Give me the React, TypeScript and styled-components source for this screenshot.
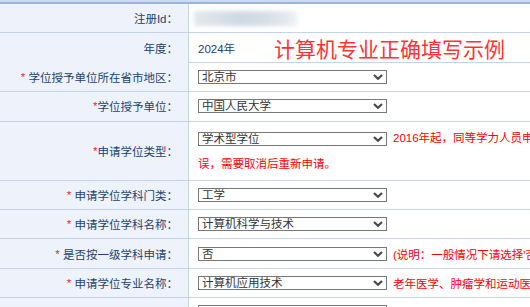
import React from 'react';
import styled, { createGlobalStyle } from 'styled-components';

const Global = createGlobalStyle`
  html, body {
    margin: 0;
    padding: 0;
    background: #fff;
    overflow: hidden;
  }
  body {
    font-family: "Liberation Sans", "Noto Sans CJK SC", sans-serif;
    font-size: 11.5px;
  }
`;

const Wrapper = styled.div`
  width: 835px;
  border-top: 2px solid #cbdaee;
`;

const Form = styled.div`
  border-top: 2px solid #98b6db;
`;

interface RowProps {
  tall?: boolean;
}

const Row = styled.div<RowProps>`
  display: grid;
  grid-template-columns: 189px 1fr;
  height: ${(p) => (p.tall ? '59px' : '29.4px')};
  box-sizing: border-box;
  border-bottom: 1px solid #c3d4ea;
`;

const Label = styled.div`
  display: flex;
  align-items: center;
  justify-content: flex-end;
  padding-right: 10px;
  background: #eef3fb;
  border-right: 1px solid #c3d4ea;
  color: #21426e;
  white-space: nowrap;
`;

const Star = styled.span`
  color: #f01e2c;
`;

const Value = styled.div`
  display: flex;
  align-items: center;
  padding: 0 9px;
  color: #21426e;
  white-space: nowrap;
  min-width: 0;
`;

const TallValue = styled.div`
  padding: 3px 9px;
  line-height: 26px;
  color: #ff0000;
`;

const Blurred = styled.div`
  width: 104px;
  height: 15px;
  margin-left: -4px;
  background: linear-gradient(
    90deg,
    #e4e8ec 0%,
    #d9e0e6 25%,
    #cdd9e3 45%,
    #d6dee5 70%,
    #e6eaee 90%,
    #f4f6f8 100%
  );
  filter: blur(2px);
`;

const Title = styled.span`
  margin-left: 39px;
  font-size: 21px;
  color: #ff3333;
  font-family: "Noto Sans CJK SC", sans-serif;
`;

const Note = styled.span`
  margin-left: 6px;
  color: #ff0000;
`;

const SelectBox = styled.span`
  position: relative;
  display: inline-block;
  width: 189px;
  height: 14px;
  vertical-align: middle;
  line-height: normal;
`;

const NativeSelect = styled.select`
  appearance: none;
  -webkit-appearance: none;
  display: block;
  width: 100%;
  height: 100%;
  box-sizing: border-box;
  margin: 0;
  padding: 0 3px;
  border: 1px solid #777;
  border-radius: 0;
  background: #fff;
  color: #333;
  font-family: "Liberation Sans", "Noto Sans CJK SC", sans-serif;
  font-size: 11.5px;
  line-height: 12px;
  outline: none;
`;

const Chevron = styled.svg`
  position: absolute;
  right: 4px;
  top: 50%;
  transform: translateY(-50%);
  pointer-events: none;
`;

const Select = ({ value }: { value: string }): JSX.Element => (
  <SelectBox>
    <NativeSelect defaultValue={value}>
      <option value={value}>{value}</option>
    </NativeSelect>
    <Chevron width="10" height="6" viewBox="0 0 10 6">
      <polyline points="1,1 5,4.8 9,1" fill="none" stroke="#4a4a4a" strokeWidth="2.2" />
    </Chevron>
  </SelectBox>
);

const App = (): JSX.Element => {
  return (
    <>
      <Global />
      <Wrapper>
        <Form>
          <Row>
            <Label>注册Id：</Label>
            <Value>
              <Blurred />
            </Value>
          </Row>
          <Row>
            <Label>年度：</Label>
            <Value>
              2024年
              <Title>计算机专业正确填写示例</Title>
            </Value>
          </Row>
          <Row>
            <Label>
              <Star>*</Star>&nbsp;学位授予单位所在省市地区：
            </Label>
            <Value>
              <Select value="北京市" />
            </Value>
          </Row>
          <Row>
            <Label>
              <Star>*</Star>学位授予单位：
            </Label>
            <Value>
              <Select value="中国人民大学" />
            </Value>
          </Row>
          <Row tall>
            <Label>
              <Star>*</Star>申请学位类型：
            </Label>
            <TallValue>
              <Select value="学术型学位" />
              <Note>
                2016年起，同等学力人员申请学位类型只能选择学术型学位，如选择专业学位属于错误，需要取消后重新申请。
              </Note>
            </TallValue>
          </Row>
          <Row>
            <Label>
              <Star>*</Star>&nbsp;申请学位学科门类：
            </Label>
            <Value>
              <Select value="工学" />
            </Value>
          </Row>
          <Row>
            <Label>
              <Star>*</Star>&nbsp;申请学位学科名称：
            </Label>
            <Value>
              <Select value="计算机科学与技术" />
            </Value>
          </Row>
          <Row>
            <Label>
              <Star>*</Star>&nbsp;是否按一级学科申请：
            </Label>
            <Value>
              <Select value="否" />
              <Note>(说明：一般情况下请选择'否'，按一级学科申请的请选择'是')</Note>
            </Value>
          </Row>
          <Row>
            <Label>
              <Star>*</Star>&nbsp;申请学位专业名称：
            </Label>
            <Value>
              <Select value="计算机应用技术" />
              <Note>老年医学、肿瘤学和运动医学等专业请注意选择正确的学科</Note>
            </Value>
          </Row>
          <Row>
            <Label>
              <Star>*</Star>&nbsp;研究方向：
            </Label>
            <Value>
              <Select value="" />
            </Value>
          </Row>
        </Form>
      </Wrapper>
    </>
  );
};

export default App;
